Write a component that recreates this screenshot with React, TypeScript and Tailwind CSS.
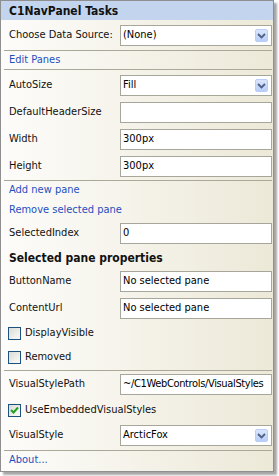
import type { ReactNode } from 'react';

const font = { fontFamily: '"DejaVu Sans Condensed", "Liberation Sans", sans-serif' };

function Chevron() {
  return (
    <span className="flex h-[13px] w-[13px] items-center justify-center rounded-[2px] border border-[#b9cdf6] bg-[linear-gradient(to_bottom,#dbe6fd,#b8cdf8)]">
      <svg width="9" height="6" viewBox="0 0 9 6">
        <path d="M1 1 L4.5 4.5 L8 1" fill="none" stroke="#4d6185" strokeWidth="1.8" />
      </svg>
    </span>
  );
}

function Box({ value, select, tight }: { value: string; select?: boolean; tight?: boolean }) {
  return (
    <div className="flex h-[21px] w-[152px] items-center justify-between overflow-hidden whitespace-nowrap border border-[#a7a69a] bg-white pl-[2px] pr-[3px] text-[11px] text-black">
      <span className={tight ? 'tracking-[-0.35px]' : ''}>{value}</span>
      {select ? <Chevron /> : null}
    </div>
  );
}

function Row({ label, children, className = '' }: { label: string; children: ReactNode; className?: string }) {
  return (
    <div className={`flex h-[21px] items-center justify-between pl-[8px] pr-[1px] ${className}`}>
      <span className="text-[11px] text-[#111]">{label}</span>
      {children}
    </div>
  );
}

function Sep({ className = '' }: { className?: string }) {
  return <div className={`ml-[3px] mr-[1px] h-px bg-[#aca899] ${className}`} />;
}

function LinkRow({ text, className = '' }: { text: string; className?: string }) {
  return (
    <div className={`flex items-center pl-[8px] text-[11px] text-[#1f4fc0] ${className}`}>{text}</div>
  );
}

function Check({ label, checked, className = '' }: { label: string; checked?: boolean; className?: string }) {
  return (
    <div className={`flex items-center gap-[4px] pl-[7px] ${className}`}>
      <span className="flex h-[13px] w-[13px] items-center justify-center border border-[#1c5180] bg-[linear-gradient(135deg,#dcdcd5,#fbfbf9)]">
        {checked ? (
          <svg width="9" height="8" viewBox="0 0 9 8">
            <path d="M1 4 L3.5 6.5 L8 1.5" fill="none" stroke="#21a121" strokeWidth="2" />
          </svg>
        ) : null}
      </span>
      <span className="text-[11px] text-[#111]">{label}</span>
    </div>
  );
}

export default function App() {
  return (
    <div className="h-[476px] w-[279px] bg-white" style={font}>
      <div className="flex h-[472px] w-[274px] flex-col border border-[#8f8f8f] bg-[linear-gradient(to_right,#fdfcfa,#ece9d8)] shadow-[3px_3px_2px_rgba(0,0,0,0.35)]">
        <div className="flex h-[19px] shrink-0 items-center bg-[#c2d4ee] pl-[8px] text-[12px] font-bold text-[#111]">
          C1NavPanel Tasks
        </div>
        <Row label="Choose Data Source:" className="mt-[5px]">
          <Box value="(None)" select />
        </Row>
        <Sep className="mt-[4px]" />
        <LinkRow text="Edit Panes" className="h-[18px]" />
        <Sep />
        <Row label="AutoSize" className="mt-[5px]">
          <Box value="Fill" select />
        </Row>
        <Row label="DefaultHeaderSize" className="mt-[6px]">
          <Box value="" />
        </Row>
        <Row label="Width" className="mt-[6px]">
          <Box value="300px" />
        </Row>
        <Row label="Height" className="mt-[6px]">
          <Box value="300px" />
        </Row>
        <Sep className="mt-[3px]" />
        <LinkRow text="Add new pane" className="h-[19px]" />
        <LinkRow text="Remove selected pane" className="h-[21px]" />
        <Row label="SelectedIndex" className="mt-[2px]">
          <Box value="0" />
        </Row>
        <div className="flex h-[27px] items-center pl-[8px] text-[12px] font-bold text-[#111]">
          Selected pane properties
        </div>
        <Row label="ButtonName">
          <Box value="No selected pane" />
        </Row>
        <Row label="ContentUrl" className="mt-[6px]">
          <Box value="No selected pane" />
        </Row>
        <Check label="DisplayVisible" className="mt-[6px] h-[16px]" />
        <Check label="Removed" className="mt-[8px] h-[16px]" />
        <Sep className="mt-[5px]" />
        <Row label="VisualStylePath" className="mt-[3px]">
          <Box value="~/C1WebControls/VisualStyles" tight />
        </Row>
        <Check label="UseEmbeddedVisualStyles" checked className="mt-[7px] h-[16px]" />
        <Row label="VisualStyle" className="mt-[7px]">
          <Box value="ArcticFox" select />
        </Row>
        <Sep className="mt-[4px]" />
        <LinkRow text="About..." className="h-[18px]" />
      </div>
    </div>
  );
}
